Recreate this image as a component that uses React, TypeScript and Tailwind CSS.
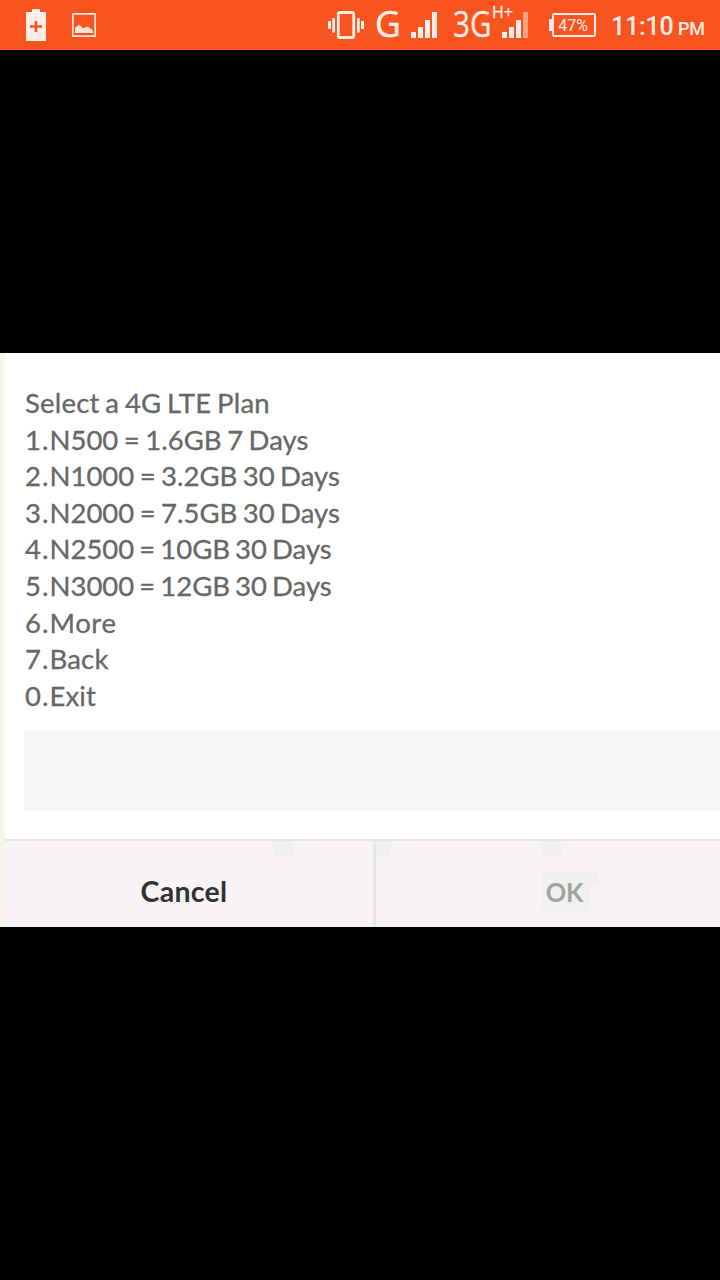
import { clsx } from "clsx";

const plans = [
  { text: "Select a 4G LTE Plan", spacing: "tracking-[0.2px] [word-spacing:-1.5px]" },
  { num: "1.", text: "N500 = 1.6GB 7 Days", spacing: "[word-spacing:-1.5px]" },
  { num: "2.", text: "N1000 = 3.2GB 30 Days", spacing: "[word-spacing:-1.6px]" },
  { num: "3.", text: "N2000 = 7.5GB 30 Days", spacing: "[word-spacing:-1.6px]" },
  { num: "4.", text: "N2500 = 10GB 30 Days", spacing: "[word-spacing:-2px]" },
  { num: "5.", text: "N3000 = 12GB 30 Days", spacing: "[word-spacing:-2px]" },
  { num: "6.", text: "More", spacing: "tracking-[0.6px]" },
  { num: "7.", text: "Back", spacing: "tracking-[0.2px]" },
  { num: "0.", text: "Exit", spacing: "tracking-[0.1px]" },
];

function BatteryPlusIcon() {
  return (
    <svg className="ml-[26px] h-[32px] w-[20px]" viewBox="0 0 20 32" fill="#ffece6">
      <path d="M6 0h8v3h6v29H0V3h6z" />
      <path d="M8.7 12h2.6v4.2H16v2.6h-4.7V23H8.7v-4.2H4v-2.6h4.7z" fill="#f8541f" />
    </svg>
  );
}

function ImageIcon() {
  return (
    <svg className="ml-[26px] h-[24px] w-[24px]" viewBox="0 0 24 24" fill="#ffe3d9">
      <path d="M0 0h24v24H0zM1.7 1.7v20.6h20.6V1.7z" fillRule="evenodd" />
      <path d="M3 20v-5l4-3.5 4.3 4L15 13.5l3 1.5 2.8 2.5V20z" />
    </svg>
  );
}

function VibrateIcon() {
  return (
    <svg className="h-[28px] w-[36px]" viewBox="0 0 36 28" fill="#ffece6">
      <path d="M0 10h3v8H0zM4.3 7h2.7v14.5H4.3zM29 7h2.7v14.5H29zM33 10h3v8h-3z" />
      <rect x="10.3" y="1.5" width="15.4" height="25" rx="1.5" fill="none" stroke="#ffece6" strokeWidth="2.8" />
    </svg>
  );
}

function Signal({ weak }: { weak?: boolean }) {
  return (
    <svg className="h-[26px] w-[26px]" viewBox="0 0 26 26" fill="#ffece6">
      <path d="M0 20h5v6H0zM7 15h5v11H7zM14 8h5v18h-5z" />
      <path d="M21 0h5v26h-5z" opacity={weak ? 0.5 : 1} />
    </svg>
  );
}

function StatusBar() {
  return (
    <div className="flex h-[50px] items-center bg-[#f8541f] text-[#ffece6]">
      <BatteryPlusIcon />
      <ImageIcon />
      <div className="ml-auto flex h-[50px] items-center">
        <VibrateIcon />
        <span className="mb-[4px] ml-[11px] w-[25px] origin-left scale-x-[0.96] font-['Open_Sans'] text-[37px] leading-[50px] [-webkit-text-stroke:0.5px]">
          G
        </span>
        <span className="ml-[11px]">
          <Signal />
        </span>
        <span className="mb-[4px] ml-[16px] w-[40px] origin-left scale-x-[0.8] font-['Open_Sans'] text-[37px] leading-[50px] [-webkit-text-stroke:0.3px]">
          3G
        </span>
        <div className="relative ml-[9px]">
          <Signal weak />
          <span className="absolute -top-[11px] -left-[10px] font-['Open_Sans'] text-[16px] leading-[22px] [-webkit-text-stroke:0.3px]">H+</span>
        </div>
        <svg className="ml-[21px] h-[24px] w-[3px]" viewBox="0 0 3 24" fill="#ffece6">
          <path d="M0 6h3v12H0z" />
        </svg>
        <div className="flex h-[24px] w-[44px] items-center justify-center rounded-[2px] border-2 border-[#ffece6] pt-px pr-[2px] font-['Roboto'] text-[16px]">
          47%
        </div>
        <span className="ml-[15px] w-[64px] pt-[3px] font-['Roboto'] text-[25px] leading-none font-medium tracking-[-0.2px]">
          11:10
        </span>
        <span className="mr-[16px] ml-[3px] w-[26px] pt-[7px] font-['Roboto'] text-[18px] leading-none font-medium tracking-[-0.3px]">
          PM
        </span>
      </div>
    </div>
  );
}

export default function App() {
  return (
    <div className="flex h-[1280px] w-[720px] flex-col overflow-hidden bg-black">
      <StatusBar />
      <div className="mt-[303px] flex h-[574px] flex-col border-l-[5px] border-[#f6f7ec] bg-white font-['Lato']">
        <div className="flex h-[378px] flex-col pt-[32px] pl-[20px] text-[27.5px] leading-[36.6px] text-[#666866] [-webkit-text-stroke:0.3px]">
          {plans.map((plan) => (
            <span key={plan.text} className={clsx("w-fit whitespace-nowrap", plan.spacing)}>
              {plan.num && <span className="tracking-[1px]">{plan.num}</span>}
              {plan.text}
            </span>
          ))}
        </div>
        <div className="ml-[19px] h-[80px] bg-[#f7f7f7]" />
        <div className="mt-[28px] flex h-[88px] border-t-2 border-[#e5e7e6] bg-[#f7f3f6] text-[27.5px] font-bold">
          <button className="relative w-[368px] pr-[10px] pt-[15px] text-[28.5px] tracking-[0.3px] text-[#303330]">
            <span className="absolute top-0 left-[268px] h-[16px] w-[20px] bg-[#eff0f0]" />
            Cancel
          </button>
          <div className="relative flex flex-1 border-l-[3px] border-[#e5e8e7]">
            <span className="absolute top-0 left-0 h-[16px] w-[15px] bg-[#eff0f0]" />
            <span className="absolute top-0 left-[165px] h-[16px] w-[20px] bg-[#eff0f0]" />
            <span className="absolute top-[30px] left-[165px] h-[15px] w-[58px] bg-[#eff0f0]" />
            <button className="relative mt-[30px] ml-[165px] h-[40px] w-[48px] bg-[#eff0f0] text-[#a1a3a1]">
              <span className="inline-block scale-x-[0.92]">OK</span>
            </button>
          </div>
        </div>
      </div>
    </div>
  );
}
